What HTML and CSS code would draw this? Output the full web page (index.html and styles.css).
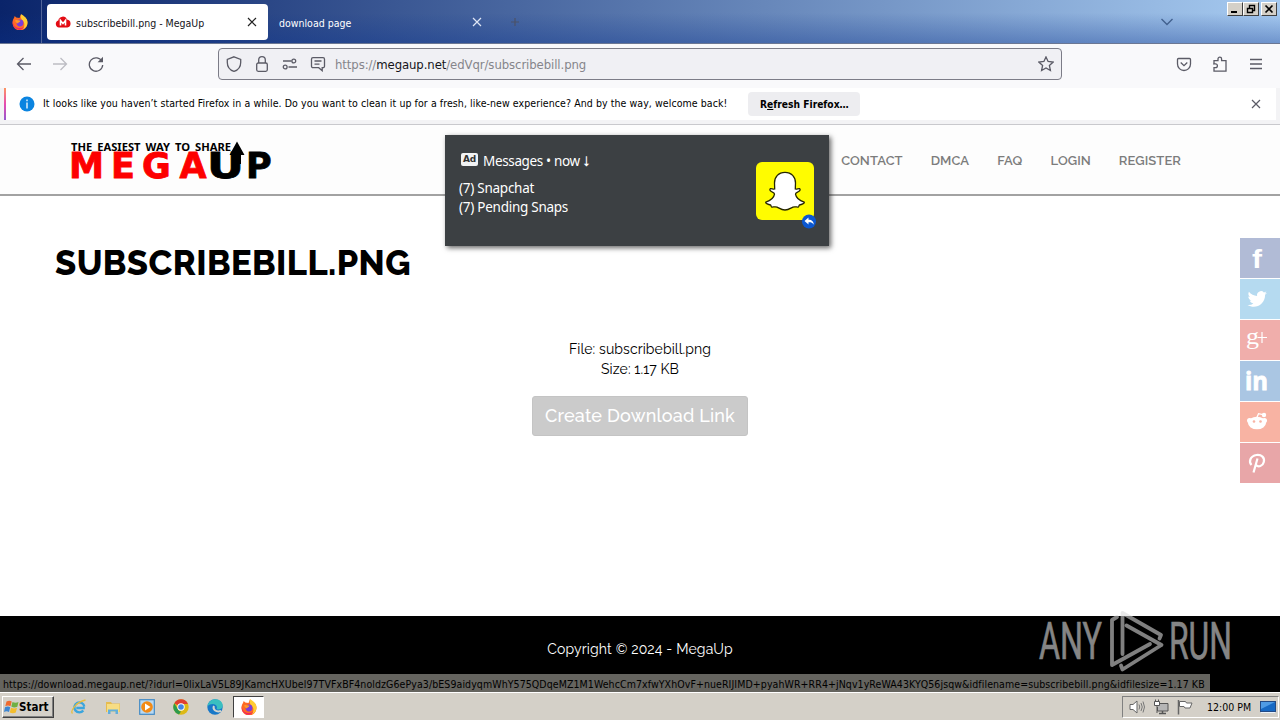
FILE: index.html
```html
<!DOCTYPE html>
<html lang="en">
  <head>
    <meta charset="UTF-8" />
    <title>subscribebill.png - MegaUp</title>
    <link rel="stylesheet" href="styles.css">
  </head>
  <body>
    <!-- Tab strip -->
    <div class="tab-bar">
      <div class="firefox-view">
        <svg width="16" height="16" viewBox="0 0 16 16">
          <use href="#firefox" />
        </svg>
      </div>
      <div class="tab active">
        <svg width="16" height="12" viewBox="0 0 16 12">
          <path d="M4 11.500a3.600 3.600 0 0 1-.7-7A4.500 4.500 0 0 1 12 3.600a4 4 0 0 1 .3 7.900z" fill="#e30b13" />
          <path d="M5.500 9.500v-5l2.500 3 2.500-3v5" fill="none" stroke="#fff" stroke-width="1.600" />
        </svg>
        <span class="tab-title first">subscribebill.png - MegaUp</span>
        <svg class="tab-close" width="10" height="10" viewBox="0 0 10 10">
          <path d="M1 1l8 8M9 1l-8 8" stroke="#222" stroke-width="1.200" />
        </svg>
      </div>
      <div class="tab">
        <span class="tab-title second">download page</span>
        <svg class="tab-close" width="10" height="10" viewBox="0 0 10 10">
          <path d="M1 1l8 8M9 1l-8 8" stroke="#dfe6f5" stroke-width="1.200" />
        </svg>
      </div>
      <svg class="new-tab" width="10" height="10" viewBox="0 0 10 10">
        <path d="M5 1v8M1 5h8" stroke="#4b5268" stroke-width="1.200" />
      </svg>
      <svg class="tab-list" width="14" height="8" viewBox="0 0 14 8">
        <path d="M1.500 1l5.500 5.500L12.500 1" fill="none" stroke="#42618f" stroke-width="1.400" />
      </svg>
      <div class="window-buttons">
        <span class="win-btn"><svg width="10" height="10"><path d="M1 8h6" stroke="#000" stroke-width="2" /></svg></span>
        <span class="win-btn"><svg width="10" height="10"><path d="M3.500 4V1.500h5v5H7M3 1.500h6M1.500 4.500h5v4h-5zM1 4.500h6" fill="none" stroke="#000" stroke-width="1.400" /></svg></span>
        <span class="win-btn close"><svg width="10" height="10"><path d="M1.500 1.500l7 7M8.500 1.500l-7 7" stroke="#000" stroke-width="1.700" /></svg></span>
      </div>
    </div>

    <!-- Navigation toolbar -->
    <div class="nav-bar">
      <svg class="back" width="16" height="16" viewBox="0 0 16 16"><path d="M15 8H1.500M7.500 2l-6 6 6 6" /></svg>
      <svg class="forward" width="16" height="16" viewBox="0 0 16 16"><path d="M1 8h13.500M8.500 2l6 6-6 6" /></svg>
      <svg class="reload" width="16" height="16" viewBox="0 0 16 16"><path d="M14 5.500A6.700 6.700 0 1 0 14.700 9" /><path d="M15 .8v5.400H9.600z" fill="#5b5b66" stroke="none" /></svg>
      <div class="url-bar">
        <svg width="16" height="16" viewBox="0 0 16 16"><path d="M8 .8l6.700 2.600v3C14.700 10.500 12 14 8 15.400 4 14 1.300 10.500 1.300 6.400v-3z" /></svg>
        <svg width="16" height="16" viewBox="0 0 16 16"><rect x="2.700" y="7" width="10.600" height="8.300" rx="1.500" /><path d="M4.700 7V4a3.300 3.300 0 0 1 6.600 0v3" /></svg>
        <svg width="16" height="16" viewBox="0 0 16 16"><path d="M1 5h8.500M6.500 11H15" /><circle cx="11.800" cy="5" r="1.900" /><circle cx="3.200" cy="11" r="1.900" /></svg>
        <svg width="16" height="16" viewBox="0 0 16 16"><path d="M3 1.700h10a1.500 1.500 0 0 1 1.500 1.500v7a1.500 1.500 0 0 1-1.500 1.500h-.8v3l-3.500-3H3a1.500 1.500 0 0 1-1.500-1.500v-7A1.500 1.500 0 0 1 3 1.700zM4.500 5h7M4.500 8.200h5" /></svg>
        <span class="url">https://<b>megaup.net</b>/edVqr/subscribebill.png</span>
        <svg class="bookmark" width="16" height="16" viewBox="0 0 16 16"><path d="M8 .9l2.100 4.600 5 .6-3.700 3.400 1 5L8 12l-4.400 2.500 1-5L.9 6.100l5-.6z" /></svg>
      </div>
      <svg class="pocket" width="16" height="16" viewBox="0 0 16 16"><path d="M2.500 2.500h11c.6 0 1 .4 1 1V8a6.500 6.500 0 0 1-13 0V3.500c0-.6.4-1 1-1zM4.700 6.500L8 9.600l3.300-3.100" /></svg>
      <svg class="extensions" width="16" height="16" viewBox="0 0 16 16"><path d="M2 7.200V4.600h4V3a1.800 1.800 0 0 1 3.600 0v1.600H14v10.600H2v-3.500h1.500a1.900 1.900 0 0 0 0-3.800H1.800z" /></svg>
      <svg class="menu" width="16" height="16" viewBox="0 0 16 16"><path d="M2 3.500h12M2 8h12M2 12.500h12" /></svg>
    </div>

    <!-- Notification bar -->
    <div class="notification">
      <div class="notification-box">
        <svg width="16" height="16" viewBox="0 0 16 16">
          <circle cx="8" cy="8" r="7.500" fill="#0b84e0" />
          <path d="M8 3.500v1.700M8 6.500v6" stroke="#fff" stroke-width="1.300" />
        </svg>
        <span class="notification-text">It looks like you haven’t started Firefox in a while. Do you want to clean it up for a fresh, like-new experience? And by the way, welcome back!</span>
        <button class="refresh"><span>R<u>e</u>fresh Firefox…</span></button>
        <svg class="dismiss" width="10" height="10" viewBox="0 0 10 10"><path d="M1 1l8 8M9 1l-8 8" stroke="#5b5b66" stroke-width="1.200" /></svg>
      </div>
    </div>

    <!-- Web page -->
    <header class="site-header">
      <svg class="logo" width="206" height="50" viewBox="0 0 206 50">
        <text class="tagline" x="2" y="12" textLength="160" lengthAdjust="spacingAndGlyphs">THE EASIEST WAY TO SHARE</text>
        <text class="logo-text red" y="39" x="0" textLength="35" lengthAdjust="spacingAndGlyphs">M</text>
        <text class="logo-text red" y="39" x="42 73 110.500">EGA</text>
        <text class="logo-text" y="39" x="138" textLength="37" lengthAdjust="spacingAndGlyphs">U</text>
        <text class="logo-text" y="39" x="177">P</text>
        <path d="M168 2.500l7.500 13.500h-3.500v9h-8v-9h-3.500z" />
      </svg>
      <nav class="site-nav">
        <a class="contact">CONTACT</a>
        <a class="dmca">DMCA</a>
        <a class="faq">FAQ</a>
        <a class="login">LOGIN</a>
        <a class="register">REGISTER</a>
      </nav>
    </header>

    <main class="content">
      <h1><span>SUBSCRIBEBILL.PNG</span></h1>
      <div class="file-info">
        <div class="file-name">File: subscribebill.png</div>
        <div class="file-size">Size: 1.17 KB</div>
        <button class="create-link"><span>Create Download Link</span></button>
      </div>
    </main>

    <footer class="site-footer"><span>Copyright © 2024 - MegaUp</span></footer>

    <!-- Push style ad -->
    <div class="ad">
      <div class="ad-text">
        <div class="ad-head"><span class="ad-badge">Ad</span><span class="ad-title">Messages • now ⭣</span></div>
        <div class="ad-line one">(7) Snapchat</div>
        <div class="ad-line two">(7) Pending Snaps</div>
      </div>
      <svg class="snap" width="64" height="68" viewBox="0 0 64 68">
        <rect x="1" y="0" width="58" height="58" rx="6" fill="#fffc00" />
        <path d="M30 10.300c6.500 0 10.500 4.700 10.500 10.700l-.2 6c1.500.5 3-.8 4.200-.4 1.300.7.500 2.200-.8 2.900-1.400.8-3.300 1-3.200 2.700.6 3.600 4 6.500 8.700 7.900.8 1.300-3 2.500-4.800 2.900-.6.500-.3 1.800-1.100 2-1.400.2-3.400-.6-5.400.1-2.300.9-3.900 2.900-7.900 2.900s-5.600-2-7.900-2.900c-2-.7-4 .1-5.400-.1-.8-.2-.5-1.500-1.100-2-1.800-.4-5.600-1.600-4.800-2.900 4.700-1.400 8.100-4.300 8.700-7.900.1-1.700-1.800-1.900-3.200-2.700-1.300-.7-2.100-2.200-.8-2.900 1.200-.4 2.700.9 4.200.4l-.2-6c0-6 4-10.700 10.500-10.700z" fill="#fff" stroke="#262600" stroke-width="1.300" />
        <circle cx="54" cy="59.500" r="7" fill="#0b57d0" />
        <path d="M49.500 59l4-3.500v2.200c3.500 0 5.300 2 5.200 5-1.200-2-2.700-2.500-5.200-2.400v2.200z" fill="#fff" />
      </svg>
    </div>

    <!-- Share buttons -->
    <div class="share">
      <a class="facebook"><svg width="40" height="40"><text x="12" y="30" textLength="10" lengthAdjust="spacingAndGlyphs">f</text></svg></a>
      <a class="twitter"><svg width="40" height="40"><path d="M27 13.800c-.8.400-1.500.6-2.300.7.800-.5 1.400-1.200 1.700-2-.8.400-1.600.7-2.500.9a4 4 0 0 0-6.800 3.600c-3.200-.2-6.200-1.700-8.200-4.200-1 1.800-.5 4.100 1.200 5.300-.6 0-1.200-.2-1.800-.5 0 1.900 1.300 3.500 3.200 3.900-.6.200-1.200.2-1.800.1.500 1.600 2 2.700 3.700 2.800A8 8 0 0 1 7.500 26c7.700 4.700 17.600-.2 17.600-10.200.8-.5 1.400-1.200 1.900-2z" /></svg></a>
      <a class="google"><svg width="40" height="40"><text x="6" y="24" textLength="13" lengthAdjust="spacingAndGlyphs">g</text><path d="M22 12v11M17.500 17.500h9.500" stroke="#fff" stroke-width="1.200" /></svg></a>
      <a class="linkedin"><svg width="40" height="40"><text x="5" y="29" textLength="23" lengthAdjust="spacingAndGlyphs">in</text></svg></a>
      <a class="reddit"><svg width="40" height="40"><path d="M17 15.200l1.500-3.500 4.500 1" fill="none" stroke="#fff" stroke-width="1.300" /><circle cx="24" cy="13" r="2.200" /><circle cx="9.500" cy="18.500" r="2.500" /><circle cx="24.500" cy="18.500" r="2.500" /><ellipse cx="17" cy="21" rx="9" ry="6.300" /><circle class="eye" cx="14" cy="19.500" r="1.300" /><circle class="eye" cx="20.500" cy="19.500" r="1.300" /></svg></a>
      <a class="pinterest"><svg width="40" height="40"><path d="M11.500 22c-3-3-1.500-9 5-10 5-.6 8.500 2.500 7.300 7-1 4.200-5.500 5.500-7.700 3M17.500 15.500l-4 14" fill="none" stroke="#fff" stroke-width="2.200" /></svg></a>
    </div>

    <!-- Link target shown by the browser -->
    <div class="status"><span>https://download.megaup.net/?idurl=0lixLaV5L89JKamcHXUbel97TVFxBF4noldzG6ePya3/bES9aidyqmWhY575QDqeMZ1M1WehcCm7xfwYXhOvF+nueRIJIMD+pyahWR+RR4+jNqv1yReWA43KYQ56jsqw&amp;idfilename=subscribebill.png&amp;idfilesize=1.17 KB</span></div>

    <svg class="watermark" width="200" height="66" viewBox="0 0 200 66">
      <text x="3" y="51" textLength="63" lengthAdjust="spacingAndGlyphs">ANY</text>
      <text x="133" y="51" textLength="63" lengthAdjust="spacingAndGlyphs">RUN</text>
      <path d="M81 9l-5 3v45l38-21M86.500 46V5L125 27l-1.500 3.500M90.500 17.500l35 19.500-39 24.500-1.500-4" />
    </svg>

    <!-- Taskbar -->
    <div class="taskbar">
      <div class="start">
        <svg width="16" height="16" viewBox="0 0 16 16">
          <path d="M2.500 2.500q3-1.500 5.200 0L6.500 7.200q-2.500-1.300-5.200 0z" fill="#ef6a2f" />
          <path d="M8.500 3q3 1.500 6 0l-1.200 4.800q-3 1.400-6-.2z" fill="#70b044" />
          <path d="M1 8.200q3-1.400 5.200 0L5 13q-2.500-1.300-5 0z" fill="#3d86d2" />
          <path d="M7 8.700q3 1.500 6 .1l-1.200 4.700q-3 1.400-6-.1z" fill="#f3bd2d" />
        </svg>
        <span>Start</span>
      </div>
      <div class="quick">
        <svg width="16" height="16" viewBox="0 0 16 16">
          <path d="M13.800 9H5.300M13.300 7.500a5 5 0 1 0-1 4" fill="none" stroke="#3ba5dd" stroke-width="2.400" />
          <path d="M1.500 14.500C-1 12 5 3 14.500 1" fill="none" stroke="#e8bd3c" stroke-width="1.300" />
        </svg>
        <svg width="16" height="16" viewBox="0 0 16 16">
          <path d="M1 3h5l1 1.500h8V13H1z" fill="#e6bc50" />
          <path d="M2 5h12.500v8H2z" fill="#f7dd83" />
          <path d="M3 15v-4.500h10V15h-2.500v-2.500h-5V15z" fill="#62aedb" />
        </svg>
        <svg width="16" height="16" viewBox="0 0 16 16">
          <rect x=".7" y=".7" width="14.600" height="14.600" fill="#b8d9f3" stroke="#438ac5" stroke-width="1.200" />
          <circle cx="8" cy="8" r="5.800" fill="#f28a16" />
          <path d="M6 4.500v7L11.500 8z" fill="#fff" />
        </svg>
        <svg width="16" height="16" viewBox="0 0 16 16">
          <circle cx="8" cy="8" r="7.700" fill="#ddb916" />
          <path d="M8 8L1.300 4.200a7.700 7.700 0 0 1 13.400 0L14.500 5H8z" fill="#df3e32" />
          <path d="M1.300 4.200L6 12l2 .5-2 3A7.700 7.700 0 0 1 1.300 4.200z" fill="#2d9b4e" />
          <circle cx="8" cy="8" r="3.700" fill="#fff" />
          <circle cx="8" cy="8" r="2.800" fill="#4285e4" />
        </svg>
        <svg width="16" height="16" viewBox="0 0 16 16">
          <circle cx="8" cy="8" r="7.700" fill="#1878c8" />
          <path d="M.4 7.500C1 3 4.500.3 8.500.3c4.500 0 7.200 3.200 7.200 6.200 0 3-2.500 4.300-5 4-1.500-.2-1-1-.7-2C10 5 4 3.500.4 7.500z" fill="#39bfc0" />
          <path d="M7 7c-1.500 3 1.500 6.500 7 5" fill="none" stroke="#d3d5cf" stroke-width="2" />
        </svg>
        <div class="running">
          <svg width="16" height="16" viewBox="0 0 16 16"><use href="#firefox" /></svg>
        </div>
      </div>
      <div class="tray">
        <svg width="16" height="16" viewBox="0 0 16 16"><path d="M1 5.500h3L8 2v12l-4-3.500H1z" fill="#fff" stroke="#666" /><path d="M10 5.500q1.500 2.500 0 5M12 4q2.500 4 0 8M14 2.500q3 5.500 0 11" fill="none" stroke="#777" /></svg>
        <svg width="16" height="16" viewBox="0 0 16 16"><path d="M5.500 4.500h9.500v7.500H4.500V8" fill="#b5b5b5" stroke="#555" /><path d="M6 14.500h7M9.500 12v2" stroke="#555" stroke-width="1.500" /><path d="M1.500 2.500h5v4h-5zM2.500.5v2M5.500.5v2M4 7v7" fill="#fff" stroke="#555" /></svg>
        <svg width="16" height="16" viewBox="0 0 16 16"><path d="M1.500 1v14.500" stroke="#666" stroke-width="1.500" /><path d="M2.500 2.500h6l1 1.500h5.500l-2 5h-5l-1-1.500H2.500z" fill="#fff" stroke="#666" /></svg>
        <span class="clock">12:00 PM</span>
        <svg class="desktop" width="16" height="14" viewBox="0 0 16 14"><rect x=".5" y="1.500" width="15" height="10" fill="#1769c4" stroke="#234a85" /><path d="M1 2h14L1 9z" fill="#4f9be5" /><path d="M1 12.500h14" stroke="#e9f2fb" /></svg>
      </div>
    </div>

    <svg width="0" height="0" class="symbols">
      <symbol id="firefox" viewBox="0 0 16 16">
        <path d="M2 4l.7-2 1.500 1.600L7.500 4 9 .3 11.500 3c2.700 1 4 3.200 4 6A7.500 7.500 0 0 1 .5 9C.5 7 1 5.300 2 4z" fill="#ff6a24" />
        <path d="M9 .3c3 1.500 6.500 4 6.500 8.200 0 3.500-2 5.800-4.500 6.500 2-2.500 2-6.500-.5-8.500C9 5 8.200 2.500 9 .3z" fill="#ffcc32" />
        <path d="M.8 7c0 5 3.500 7.500 8 7 2-.3 3-1 3.500-2-1.500 4-5 4.500-8 2.800A7.500 7.500 0 0 1 .8 7z" fill="#ef2862" />
        <circle cx="8" cy="9" r="3.400" fill="#7a3eda" />
        <path d="M3 6.500c2-1 3.500 0 5.500.3-.5 1.700-2.500 1.200-2.500 2.700-1.500-.5-2.500-1.500-3-3z" fill="#ff9a26" />
      </symbol>
    </svg>
  </body>
</html>
```

FILE: styles.css
```css
body {
  margin: 0;
  width: 1280px;
  height: 720px;
  display: flex;
  flex-direction: column;
  overflow: hidden;
  position: relative;
  background: #fff;
  font-family: Tahoma, "DejaVu Sans Condensed", "DejaVu Sans", sans-serif;
  font-size: 10.5px;
  color: #000;
}

svg {
  display: block;
  flex-shrink: 0;
}

span, a, h1, button {
  white-space: nowrap;
}

.symbols {
  position: absolute;
}

/* Tab strip */
.tab-bar {
  height: 44px;
  box-sizing: border-box;
  display: flex;
  align-items: center;
  position: relative;
  border-bottom: 1px solid #6b7793;
  background: linear-gradient(to bottom, rgba(10, 36, 106, 0) 30%, rgba(10, 50, 140, 0.35)), linear-gradient(to right, #0a246a, #a6caf0);
}

.firefox-view {
  width: 42px;
  height: 43px;
  box-sizing: border-box;
  padding-left: 12px;
  display: flex;
  align-items: center;
  border-right: 1px solid #52659a;
}

.tab {
  height: 36px;
  width: 221px;
  box-sizing: border-box;
  display: flex;
  align-items: center;
  padding: 0 11px 0 8px;
  color: #fff;
  border-radius: 4px;
}

.tab.active {
  margin-left: 5px;
  background: #fff;
  color: #15141a;
}

.tab-title {
  margin-left: 5px;
  padding-top: 2px;
}

.tab .second {
  margin-left: 3px;
}

.tab-close {
  margin-left: auto;
}

.tab:nth-child(3) {
  padding-right: 7px;
}

.new-tab {
  margin-left: 21px;
}

.tab-list {
  margin-left: 640px;
}

.window-buttons {
  display: flex;
  margin: 2px 3px auto auto;
}

.win-btn {
  width: 16px;
  height: 14px;
  box-sizing: border-box;
  padding: 1px 2px;
  background: #d4d0c8;
  border: 1px solid;
  border-color: #fff #404040 #404040 #fff;
}

.win-btn.close {
  margin-left: 2px;
}

/* Navigation toolbar */
.nav-bar {
  height: 44px;
  box-sizing: border-box;
  display: flex;
  align-items: center;
  padding: 0 16px;
  padding-bottom: 4px;
  background: #f9f9fb;
}

.nav-bar svg {
  fill: none;
  stroke: #5b5b66;
  stroke-width: 1.3;
}

.nav-bar .forward {
  margin-left: 20px;
  stroke: #bdbdc3;
}

.nav-bar .reload {
  margin-left: 20px;
}

.url-bar {
  margin-left: 114px;
  width: 844px;
  height: 32px;
  box-sizing: border-box;
  display: flex;
  align-items: center;
  gap: 12px;
  padding: 0 7px;
  border: 1px solid #7c7c87;
  border-radius: 4px;
  background: #f0f0f4;
}

.url {
  margin-left: -3px;
  font-size: 13px;
  letter-spacing: -0.09px;
  color: #85858b;
}

.url b {
  font-weight: normal;
  color: #15141a;
}

.bookmark {
  margin-left: auto;
}

.pocket {
  margin-left: 114px;
}

.extensions,
.menu {
  margin-left: 20px;
}

/* Notification bar */
.notification {
  height: 37px;
  box-sizing: border-box;
  padding: 0 4px 4px;
  background: #f3f3f5;
  border-bottom: 1px solid #c9c9cd;
}

.notification-box {
  height: 32px;
  box-sizing: border-box;
  display: flex;
  align-items: center;
  padding: 0 15px 0 13px;
  background: #fff;
  border-left: 2px solid;
  border-image: linear-gradient(#ff9a5c, #e64bb0, #9059d0) 1;
}

.notification-text {
  margin-left: 8px;
  padding-bottom: 2px;
  letter-spacing: 0.077px;
}

.refresh {
  margin-left: 21px;
  width: 112px;
  height: 24px;
  padding: 0;
  border: 0;
  border-radius: 4px;
  background: #ededf0;
  font: bold 10.2px "DejaVu Sans Condensed", "DejaVu Sans", sans-serif;
}

.dismiss {
  margin-left: auto;
}

/* Site header */
.site-header {
  height: 71px;
  box-sizing: border-box;
  flex-shrink: 0;
  display: flex;
  justify-content: space-between;
  padding: 14px 99px 0 69px;
  background: #fdfdfd;
  border-bottom: 2px solid #a2a2a2;
}

.logo {
  overflow: visible;
}

.tagline {
  font: bold 10.5px "Noto Sans", sans-serif;
  word-spacing: 2px;
}

.logo-text {
  font: bold 35px "DejaVu Sans", sans-serif;
  stroke: #000;
  stroke-width: 0.8;
}

.logo-text.red {
  fill: #fd0000;
  stroke: #fd0000;
}

.site-nav {
  display: flex;
  gap: 28px;
  margin-top: 14px;
  font: 600 13px/16px Raleway, Inter, sans-serif;
  letter-spacing: 0.08px;
  color: #7c7c7c;
}

/* Page content */
.content {
  flex: 1;
}

h1 {
  margin: 47px 0 0 55px;
  font: 800 34.5px/40px Raleway, Lato, sans-serif;
  letter-spacing: 0.42px;
}

.file-info {
  margin-top: 56px;
  display: flex;
  flex-direction: column;
  align-items: center;
  font: 14px/20px Raleway, Lato, sans-serif;
  letter-spacing: 0.1px;
}

.create-link {
  margin-top: 17px;
  width: 216px;
  height: 40px;
  padding: 0 0 2px;
  border: 1px solid #c4c4c4;
  border-radius: 3px;
  background: #cbcbcb;
  color: #fff;
  font: 500 18px Raleway, Lato, sans-serif;
  letter-spacing: 0.2px;
}

.site-footer {
  height: 76px;
  box-sizing: border-box;
  padding-top: 23px;
  text-align: center;
  background: #000;
  color: #fff;
  font: 14px/20px Raleway, Lato, sans-serif;
  letter-spacing: 0.16px;
}

/* Ad popup */
.ad {
  position: absolute;
  left: 445px;
  top: 135px;
  width: 384px;
  height: 111px;
  box-sizing: border-box;
  padding: 17px 11px 0 14px;
  display: flex;
  justify-content: space-between;
  background: #3c4043;
  color: #fff;
  box-shadow: 2px 2px 5px rgba(0, 0, 0, 0.6);
  font: 13.5px/19px "Noto Sans", sans-serif;
  letter-spacing: -0.26px;
}

.ad-head {
  display: flex;
  margin-bottom: 8px;
}

.ad-title {
  letter-spacing: -0.35px;
}

.ad-badge {
  width: 17px;
  height: 13px;
  margin: 1px 5px 0 2px;
  border-radius: 2px;
  background: #f1f3f4;
  color: #333;
  text-align: center;
  font: bold 9px/13px "DejaVu Sans", sans-serif;
}

.snap {
  margin: 10px -1px 0 0;
}

/* Share buttons */
.share {
  position: absolute;
  right: 0;
  top: 238px;
  display: flex;
  flex-direction: column;
  gap: 1px;
}

.share a {
  height: 40px;
}

.share svg {
  fill: #fff;
}

.facebook {
  background: #b1bbd6;
  font: bold 26px "Liberation Sans", sans-serif;
}

.twitter {
  background: #b5daf0;
}

.google {
  background: #f0aeab;
  font: 24px "Liberation Serif", serif;
}

.linkedin {
  background: #aac6e3;
  font: bold 25px "Open Sans", sans-serif;
}

.linkedin text {
  stroke: #fff;
  stroke-width: 0.8;
}

.reddit {
  background: #f8b3a3;
}

.reddit .eye {
  fill: #f8b3a3;
}

.pinterest {
  background: #e8a6a8;
}

.status {
  position: absolute;
  left: 0;
  top: 674px;
  width: 1210px;
  height: 18px;
  box-sizing: border-box;
  padding-left: 3px;
  background: #65645f;
  line-height: 20px;
  letter-spacing: 0.084px;
}

.watermark {
  position: absolute;
  left: 1036px;
  top: 608px;
  fill: #858585;
}

.watermark text {
  font: 51px Roboto, sans-serif;
  stroke: #858585;
  stroke-width: 0.7;
}

.watermark path {
  fill: none;
  stroke: rgba(217, 217, 217, 0.59);
  stroke-width: 3.8;
  stroke-linejoin: round;
  stroke-linecap: round;
}

/* Taskbar */
.taskbar {
  height: 28px;
  box-sizing: border-box;
  flex-shrink: 0;
  display: flex;
  align-items: center;
  padding: 1px 1px 0 2px;
  background: #d4d0c8;
  border-top: 1px solid #fff;
}

.start {
  width: 52px;
  height: 22px;
  box-sizing: border-box;
  display: flex;
  align-items: center;
  padding-left: 1px;
  border: 1px solid;
  border-color: #fff #404040 #404040 #fff;
  box-shadow: inset -1px -1px #808080;
  font: bold 11.5px "DejaVu Sans Condensed", "DejaVu Sans", sans-serif;
}

.start span {
  margin-left: -1px;
}

.quick {
  display: flex;
  align-items: center;
  gap: 18px;
  margin-left: 17px;
}

.running {
  width: 31px;
  height: 22px;
  box-sizing: border-box;
  margin-left: -8px;
  padding: 2px 7px;
  background: #fff;
  border: 1px solid;
  border-color: #404040 #fff #fff #404040;
}

.tray {
  margin-left: auto;
  width: 157px;
  height: 22px;
  box-sizing: border-box;
  display: flex;
  align-items: center;
  gap: 8px;
  padding-left: 6px;
  border: 1px solid;
  border-color: #808080 #fff #fff #808080;
}

.clock {
  margin-left: 6px;
}

.desktop {
  margin: 0 2px 0 auto;
}
```
